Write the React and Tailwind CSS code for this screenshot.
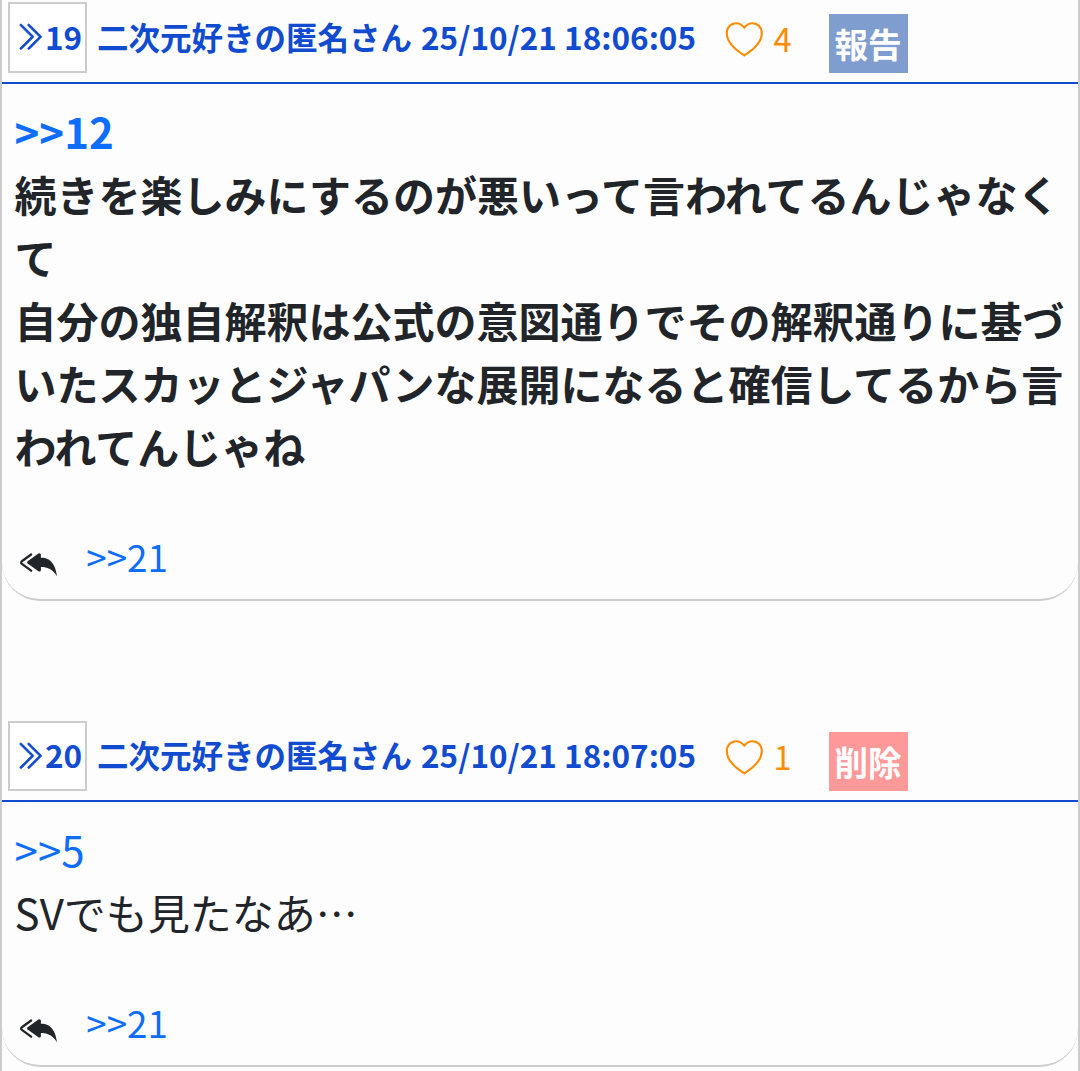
/**
 * Comment thread: a list of numbered posts with likes, a moderation button
 * and links to the replies.
 */
import { BsChevronDoubleRight, BsReplyAllFill } from 'react-icons/bs'
import clsx from 'clsx'

const POSTS = [
  {
    id: 19,
    name: '二次元好きの匿名さん',
    date: '25/10/21 18:06:05',
    likes: 4,
    action: '報告',
    actionClass: 'bg-[#7f9dcf]',
    bold: true,
    anchor: 12,
    lines: [
      '続きを楽しみにするのが悪いって言われてるんじゃなくて',
      '自分の独自解釈は公式の意図通りでその解釈通りに基づいたスカッとジャパンな展開になると確信してるから言われてんじゃね',
    ],
    replies: [21],
  },
  {
    id: 20,
    name: '二次元好きの匿名さん',
    date: '25/10/21 18:07:05',
    likes: 1,
    action: '削除',
    actionClass: 'bg-[#ff9999]',
    bold: false,
    anchor: 5,
    lines: ['SVでも見たなあ…'],
    replies: [21],
  },
]

function Heart() {
  return (
    <svg viewBox="0 0 38 36" className="w-[38px] h-9 shrink-0" fill="none" stroke="currentColor" strokeWidth="2.1">
      <path d="M19.3 6.6C16.9 3.6 14.3 2.2 11.3 2.2 5.8 2.2 1.8 6.5 1.8 12.2 1.8 19 7.3 26.8 19.3 34.4 31.3 26.8 36.8 19 36.8 12.2 36.8 6.5 32.8 2.2 27.3 2.2 24.3 2.2 21.7 3.6 19.3 6.6Z" />
    </svg>
  )
}

function PostHeader({ post }) {
  return (
    <header className="flex h-[84px] items-start border-b-2 border-[#104bd0] pl-1.5 text-[31.5px] font-bold text-[#104bd0] whitespace-nowrap">
      <div className="mt-[2.2px] flex h-[70.6px] w-[79px] shrink-0 items-center border-2 border-[#cccccc] bg-white pl-[3px] pb-0.5 leading-[65px]">
        <BsChevronDoubleRight className="mt-px size-[31.5px] shrink-0 stroke-[0.4]" />
        <span className="ml-[0.5px]">{post.id}</span>
      </div>
      <span className="ml-2.5 leading-[73px]">{post.name}</span>
      <time className="ml-[9px] w-[304px] leading-[73px]">{post.date}</time>
      <button className="flex w-[104px] items-start pt-[21px] text-[32.5px] font-normal text-[#ff8c00]">
        <Heart />
        <span className="ml-[10.5px] leading-[34px]">{post.likes}</span>
      </button>
      <button className={clsx('mt-3.5 h-[59px] w-[79px] pr-px text-[33.6px] leading-[59px] text-white', post.actionClass)}>
        {post.action}
      </button>
    </header>
  )
}

function Post({ post }) {
  return (
    <article className="rounded-b-[38px] border-b-2 border-[#cccccc]">
      <PostHeader post={post} />
      <div className={clsx('pt-[15px] pr-2.5 pl-[12.6px] text-[42px] leading-[63px]', post.bold && 'font-bold')}>
        <a className="block text-[#0d6efd]">&gt;&gt;{post.anchor}</a>
        {post.lines.map((line) => (
          <p key={line}>{line}</p>
        ))}
      </div>
      <div className="mt-12 flex h-[74px] items-start pl-[18px]">
        <BsReplyAllFill className="mt-[19px] size-[36.75px]" />
        {post.replies.map((id) => (
          <a key={id} className="ml-[29.5px] text-[36.75px] leading-[63px] text-[#0d6efd]">&gt;&gt;{id}</a>
        ))}
      </div>
    </article>
  )
}

export default function App() {
  return (
    <main
      lang="ja"
      className="flex h-[1071px] flex-col gap-[117.4px] overflow-hidden border-x-2 border-[#cccccc] bg-[#fdfdfd] font-['Noto_Sans_CJK_JP',sans-serif] text-[#212529]"
    >
      {POSTS.map((post) => (
        <Post key={post.id} post={post} />
      ))}
    </main>
  )
}
